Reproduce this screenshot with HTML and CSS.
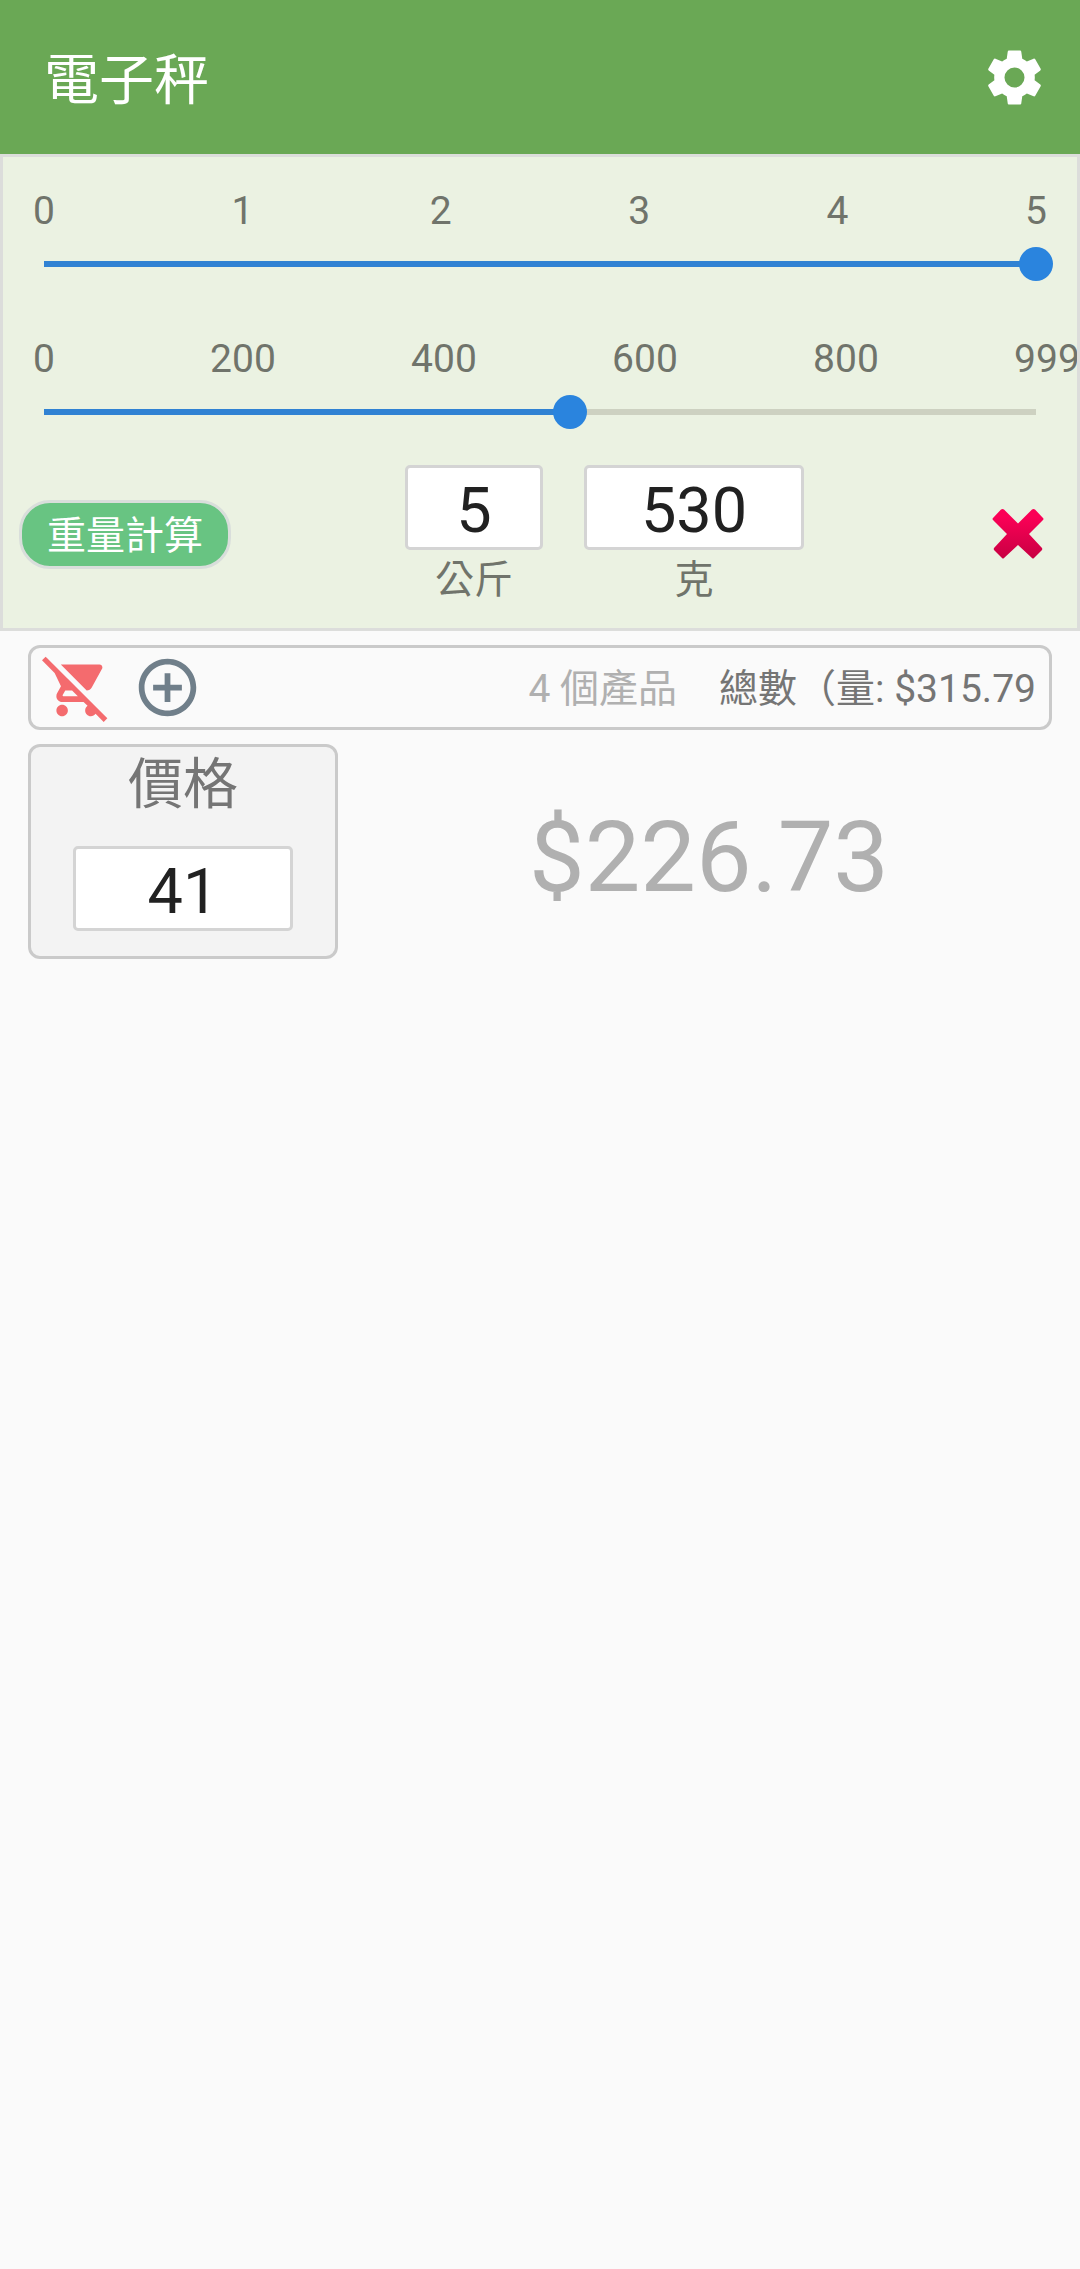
FILE: index.html
```html
<!DOCTYPE html>
<html lang="zh-Hant">
<head>
<meta charset="utf-8">
<title>電子秤</title>
<link rel="stylesheet" href="styles.css">
</head>
<body>
<header class="app-bar">
  <h1 class="app-title">電子秤</h1>
  <svg class="settings-icon" viewBox="0 0 24 24"><path d="M19.43 12.98c.04-.32.07-.64.07-.98s-.03-.66-.07-.98l2.11-1.65c.19-.15.24-.42.12-.64l-2-3.46c-.12-.22-.39-.3-.61-.22l-2.49 1c-.52-.4-1.08-.73-1.69-.98l-.38-2.65C14.46 2.18 14.25 2 14 2h-4c-.25 0-.46.18-.49.42l-.38 2.65c-.61.25-1.17.59-1.69.98l-2.49-1c-.23-.09-.49 0-.61.22l-2 3.46c-.13.22-.07.49.12.64l2.11 1.65c-.04.32-.07.65-.07.98s.03.66.07.98l-2.11 1.65c-.19.15-.24.42-.12.64l2 3.46c.12.22.39.3.61.22l2.49-1c.52.4 1.08.73 1.69.98l.38 2.65c.03.24.24.42.49.42h4c.25 0 .46-.18.49-.42l.38-2.65c.61-.25 1.17-.59 1.69-.98l2.49 1c.23.09.49 0 .61-.22l2-3.46c.12-.22.07-.49-.12-.64l-2.11-1.65zM12 15.7a3.7 3.7 0 1 1 0-7.4 3.7 3.7 0 0 1 0 7.4z"/></svg>
</header>

<section class="weight-panel">
  <div class="scale scale-kg"><span>0</span><span>1</span><span>2</span><span>3</span><span>4</span><span>5</span></div>
  <div class="slider"><div class="slider-fill" style="width:100%"></div><div class="slider-thumb"></div></div>
  <div class="scale scale-g"><span>0</span><span>200</span><span>400</span><span>600</span><span>800</span><span>999</span></div>
  <div class="slider"><div class="slider-fill" style="width:53.05%"></div><div class="slider-thumb"></div></div>
  <div class="weight-row">
    <button class="calc-button">重量計算</button>
    <div class="field field-kg"><div class="number-box">5</div><span class="unit">公斤</span></div>
    <div class="field field-g"><div class="number-box">530</div><span class="unit">克</span></div>
    <svg class="clear-icon" viewBox="0 0 52 52">
      <defs><linearGradient id="clear-fill" x1="0" y1="0" x2="0" y2="1"><stop offset="0.15" stop-color="#fb0056"/><stop offset="1" stop-color="#c80043"/></linearGradient></defs>
      <path d="M1 10 9 1.500Q10.500 0.500 12 1.500L26 15.500 40 1.500Q41.500 0.500 43 1.500L51 10Q52 11 51 12L37 26 50 40Q50.500 41 50 42L42 50Q41 51 40 50L26 37 12 50Q11 51 10 50L2 42Q1.500 41 2 40L15 26 1 12Q0 11 1 10Z" fill="url(#clear-fill)"/>
    </svg>
  </div>
</section>

<main class="content">
  <section class="cart-bar">
    <svg class="cart-icon" viewBox="0 0 24 24"><path d="M22.730 22.730L2.770 2.770 2 2l-.73-.73L0 2.540l4.390 4.390 2.210 4.660-1.350 2.450c-.16.28-.25.61-.25.96 0 1.100.9 2 2 2h7.460l1.380 1.380c-.5.36-.83.95-.83 1.620 0 1.100.89 2 1.990 2 .67 0 1.260-.33 1.620-.84L21.460 24l1.270-1.270zM7.420 15c-.14 0-.25-.11-.25-.25l.03-.12.9-1.630h2.360l2 2H7.420zm8.130-2c.75 0 1.410-.41 1.750-1.030l3.580-6.490c.08-.14.12-.31.12-.48 0-.55-.45-1-1-1H6.540l9.010 9zM7 18c-1.100 0-1.990.9-1.990 2S5.900 22 7 22s2-.9 2-2-.9-2-2-2z"/></svg>
    <svg class="add-icon" viewBox="0 0 24 24"><path d="M13 7h-2v4H7v2h4v4h2v-4h4v-2h-4V7zm-1-5C6.480 2 2 6.480 2 12s4.480 10 10 10 10-4.480 10-10S17.520 2 12 2zm0 18c-4.410 0-8-3.590-8-8s3.590-8 8-8 8 3.590 8 8-3.590 8-8 8z"/></svg>
    <span class="item-count">4 個產品</span>
    <span class="cart-total">總數（量: $315.79</span>
  </section>
  <section class="price-row">
    <div class="price-card">
      <h2 class="price-title">價格</h2>
      <div class="number-box price-box">41</div>
    </div>
    <div class="price-result">$226.73</div>
  </section>
</main>
</body>
</html>
```
FILE: styles.css
```css
* { box-sizing: border-box; }

body {
  margin: 0;
  min-height: 2269px;
  background: #fafafa;
  color: #757575;
  font-family: Roboto, "Noto Sans CJK TC", sans-serif;
  font-size: 39px;
  line-height: 46px;
}

h1, h2 { margin: 0; font-weight: 400; }

.app-bar {
  display: flex;
  align-items: center;
  justify-content: space-between;
  height: 154px;
  padding: 0 33.500px 0 44px;
  background: #6aa855;
}

.app-title { padding-top: 6px; color: #fff; font-size: 55px; line-height: 80px; }

.settings-icon { width: 65px; height: 65px; fill: #fff; }

.weight-panel {
  height: 477px;
  padding-top: 31px;
  border: 3px solid #dcdddb;
  background: #ebf2e2;
  color: #70746b;
  overflow: hidden;
}

.scale { display: grid; height: 46px; text-align: center; }
.scale-kg { grid-template-columns: repeat(6, 198.4px); margin-left: -58.2px; }
.scale-g { grid-template-columns: 197px repeat(5, 201px); margin-left: -57.500px; }

.slider {
  display: flex;
  align-items: center;
  width: 992px;
  height: 34px;
  margin: 13px 0 55px 41px;
  background: linear-gradient(#cdd1c1, #cdd1c1) center / 100% 6px no-repeat;
}
.slider-fill { flex: none; height: 6px; background: #3082d3; }
.slider-thumb {
  flex: none;
  width: 34px;
  height: 34px;
  margin-left: -17px;
  border-radius: 50%;
  background: #2a84de;
}

.weight-row { display: flex; align-items: flex-start; margin-top: -19px; padding-left: 16px; }

.calc-button {
  width: 212px;
  height: 69px;
  margin-top: 35px;
  padding: 3px 0 0;
  border: 3px solid #d9dedb;
  border-radius: 31px;
  background: #68c482;
  color: #fff;
  font: inherit;
  font-size: 39px;
}

.field { display: flex; flex-direction: column; align-items: center; }
.field-kg { width: 138px; margin-left: 174px; }
.field-g { width: 220px; margin-left: 41px; }

.number-box {
  width: 100%;
  height: 85px;
  border: 3px solid #d4d4d4;
  border-radius: 5px;
  background: #fff;
  color: #212121;
  font-size: 63px;
  line-height: 86px;
  text-align: center;
}

.unit { margin-top: 7px; font-size: 39px; }

.clear-icon { width: 52px; height: 52px; margin: 43px 0 0 188px; }

.content { padding: 14px 28px 0; }

.cart-bar {
  display: flex;
  align-items: center;
  height: 85px;
  padding: 0 13px 0 11px;
  border: 3px solid #cacaca;
  border-radius: 12px;
  font-size: 39px;
  white-space: nowrap;
}
.cart-icon { width: 69px; height: 69px; fill: #f46b6e; }
.add-icon { width: 69px; height: 69px; margin-left: 22px; fill: #707f8a; }
.item-count { margin-left: auto; padding-top: 3px; color: #b0b0b0; }
.cart-total { margin-left: 42px; padding-top: 3px; }

.price-row { display: flex; margin: 14px -28px 0 0; }

.price-card {
  width: 310px;
  height: 215px;
  padding: 0 42px;
  border: 3px solid #cacaca;
  border-radius: 12px;
  background: #f3f3f3;
}
.price-title { height: 99px; font-size: 55px; line-height: 75px; text-align: center; }

.price-result {
  flex: 1;
  padding-top: 55px;
  color: #b0b0b0;
  font-size: 99px;
  line-height: 116px;
  text-align: center;
}
```
